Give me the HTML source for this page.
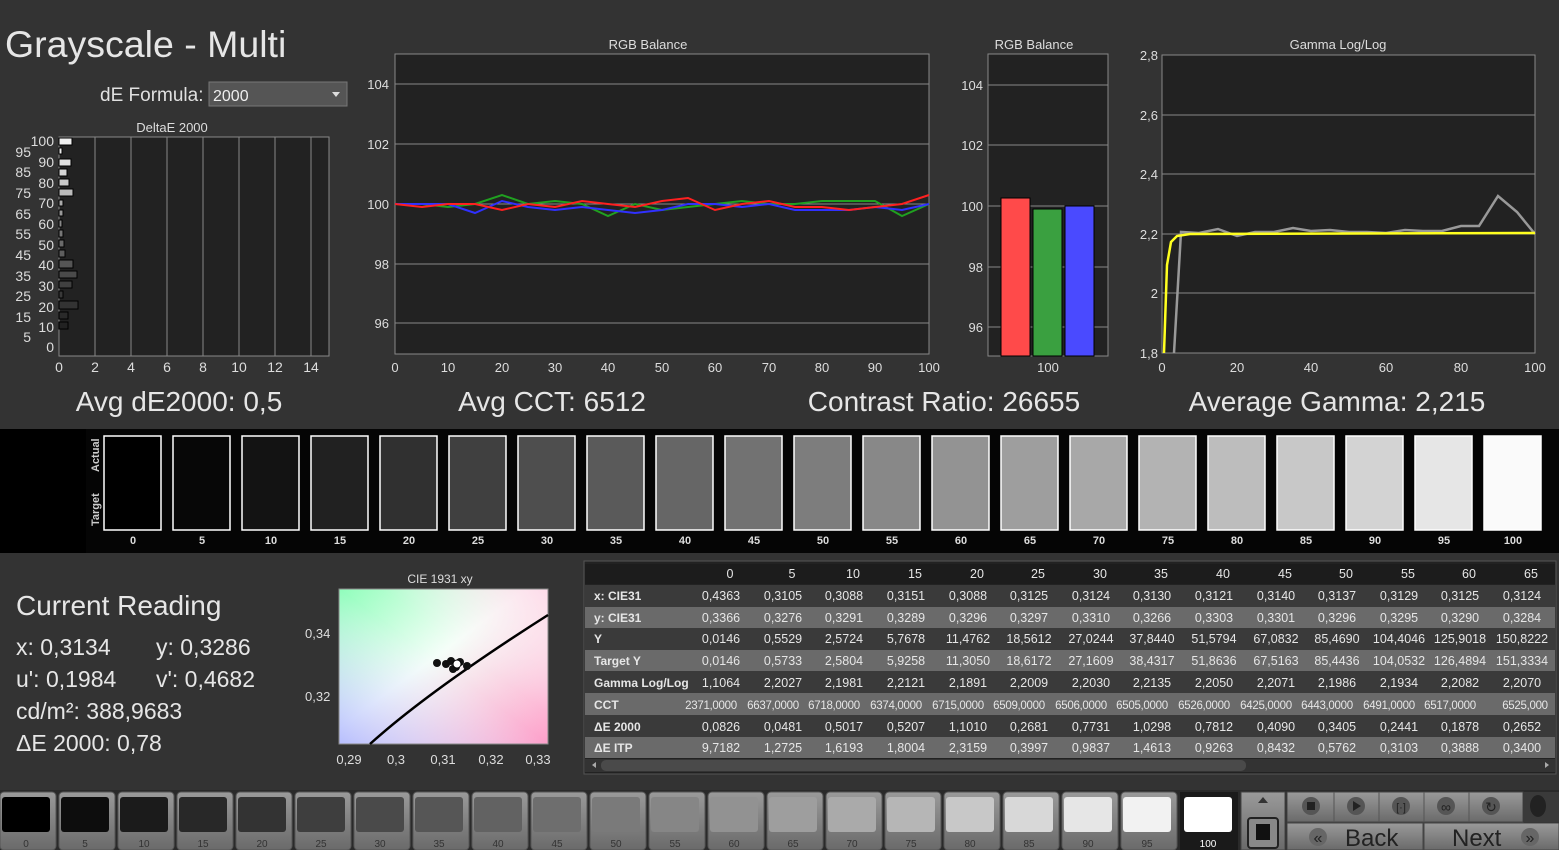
<!DOCTYPE html>
<html><head><meta charset="utf-8"><style>
html,body{margin:0;padding:0;background:#333;}
svg{display:block;font-family:"Liberation Sans",sans-serif;}
</style></head><body>
<svg width="1559" height="850" viewBox="0 0 1559 850" xmlns="http://www.w3.org/2000/svg">
<defs>
<linearGradient id="cieA" x1="0" y1="0" x2="1" y2="1">
<stop offset="0" stop-color="#7fffb0"/><stop offset="0.45" stop-color="#f4fff8"/><stop offset="1" stop-color="#ff8fc0"/></linearGradient>
<linearGradient id="cieB" x1="0" y1="1" x2="0.6" y2="0.4">
<stop offset="0" stop-color="#b0b8ff" stop-opacity="0.9"/><stop offset="1" stop-color="#ffffff" stop-opacity="0"/></linearGradient>
<linearGradient id="cieC" x1="1" y1="0" x2="0.5" y2="0.5">
<stop offset="0" stop-color="#ffd8e8" stop-opacity="0.9"/><stop offset="1" stop-color="#ffffff" stop-opacity="0"/></linearGradient>
<linearGradient id="btn" x1="0" y1="0" x2="0" y2="1"><stop offset="0" stop-color="#9a9a9a"/><stop offset="1" stop-color="#6a6a6a"/></linearGradient>
</defs>
<rect width="1559" height="850" fill="#333"/>
<text x="5" y="57" font-size="37.5" fill="#e6e6e6">Grayscale - Multi</text>
<text x="100" y="101" font-size="19" fill="#e0e0e0">dE Formula:</text>
<rect x="209" y="82" width="138" height="24" fill="#555" stroke="#777"/>
<text x="213" y="101" font-size="16" fill="#eee">2000</text>
<path d="M332 92 l8 0 l-4 5z" fill="#ddd"/>

<text x="172" y="132" font-size="13" fill="#ddd" text-anchor="middle">DeltaE 2000</text>
<rect x="59" y="137" width="270" height="219" fill="#222" stroke="#888"/>
<g stroke="#888" stroke-width="1">
<line x1="95" y1="137" x2="95" y2="356"/><line x1="131" y1="137" x2="131" y2="356"/><line x1="167" y1="137" x2="167" y2="356"/><line x1="203" y1="137" x2="203" y2="356"/><line x1="239" y1="137" x2="239" y2="356"/><line x1="275" y1="137" x2="275" y2="356"/><line x1="311" y1="137" x2="311" y2="356"/>
</g>
<g font-size="14" fill="#ddd" text-anchor="middle">
<text x="59" y="372">0</text><text x="95" y="372">2</text><text x="131" y="372">4</text><text x="167" y="372">6</text><text x="203" y="372">8</text><text x="239" y="372">10</text><text x="275" y="372">12</text><text x="311" y="372">14</text>
</g>
<g font-size="14" fill="#ddd" text-anchor="end">
<text x="54" y="146">100</text><text x="31" y="157">95</text><text x="54" y="167">90</text><text x="31" y="177">85</text><text x="54" y="188">80</text><text x="31" y="198">75</text><text x="54" y="208">70</text><text x="31" y="219">65</text><text x="54" y="229">60</text><text x="31" y="239">55</text><text x="54" y="250">50</text><text x="31" y="260">45</text><text x="54" y="270">40</text><text x="31" y="281">35</text><text x="54" y="291">30</text><text x="31" y="301">25</text><text x="54" y="312">20</text><text x="31" y="322">15</text><text x="54" y="332">10</text><text x="31" y="342">5</text><text x="54" y="352">0</text>
</g>
<g stroke="#000" stroke-width="1">
<rect x="59" y="138" width="13" height="7" fill="#f0f0f0"/>
<rect x="59" y="148" width="3" height="6" fill="#e8e8e8"/>
<rect x="59" y="159" width="12" height="7" fill="#e0e0e0"/>
<rect x="59" y="169" width="8" height="7" fill="#d4d4d4"/>
<rect x="59" y="179" width="10" height="7" fill="#c8c8c8"/>
<rect x="59" y="189" width="14" height="7" fill="#bbb"/>
<rect x="59" y="200" width="4" height="6" fill="#aaa"/>
<rect x="59" y="210" width="4" height="6" fill="#999"/>
<rect x="59" y="220" width="3" height="7" fill="#888"/>
<rect x="59" y="230" width="4" height="7" fill="#777"/>
<rect x="59" y="240" width="5" height="7" fill="#6a6a6a"/>
<rect x="59" y="250" width="6" height="7" fill="#5e5e5e"/>
<rect x="59" y="260" width="14" height="8" fill="#555"/>
<rect x="59" y="271" width="18" height="7" fill="#4a4a4a"/>
<rect x="59" y="281" width="13" height="7" fill="#404040"/>
<rect x="59" y="291" width="4" height="7" fill="#393939"/>
<rect x="59" y="301" width="19" height="8" fill="#333"/>
<rect x="59" y="312" width="9" height="7" fill="#2a2a2a"/>
<rect x="59" y="322" width="9" height="7" fill="#222"/>
</g>

<text x="648" y="49" font-size="13" fill="#ddd" text-anchor="middle">RGB Balance</text>
<rect x="395" y="54" width="534" height="300" fill="#222" stroke="#888"/>
<g stroke="#888"><line x1="395" y1="84" x2="929" y2="84"/><line x1="395" y1="144" x2="929" y2="144"/><line x1="395" y1="204" x2="929" y2="204"/><line x1="395" y1="264" x2="929" y2="264"/><line x1="395" y1="323" x2="929" y2="323"/></g>
<g font-size="13" fill="#ddd" text-anchor="end"><text x="389" y="89">104</text><text x="389" y="149">102</text><text x="389" y="209">100</text><text x="389" y="269">98</text><text x="389" y="328">96</text></g>
<g font-size="13" fill="#ddd" text-anchor="middle">
<text x="395" y="372">0</text><text x="448" y="372">10</text><text x="502" y="372">20</text><text x="555" y="372">30</text><text x="608" y="372">40</text><text x="662" y="372">50</text><text x="715" y="372">60</text><text x="769" y="372">70</text><text x="822" y="372">80</text><text x="875" y="372">90</text><text x="929" y="372">100</text></g>
<polyline fill="none" stroke="#20a020" stroke-width="2" points="395,204 422,204 448,207 475,204 502,195 528,204 555,201 582,204 608,216 635,204 662,210 688,207 715,204 742,201 769,204 795,204 822,201 849,201 875,201 902,216 929,204"/>
<polyline fill="none" stroke="#3030ff" stroke-width="2" points="395,204 422,204 448,204 475,213 502,201 528,207 555,210 582,207 608,210 635,213 662,210 688,204 715,204 742,207 769,204 795,210 822,210 849,210 875,207 902,210 929,204"/>
<polyline fill="none" stroke="#ff2020" stroke-width="2" points="395,204 422,207 448,204 475,204 502,210 528,204 555,207 582,201 608,204 635,207 662,201 688,198 715,210 742,204 769,201 795,207 822,207 849,210 875,207 902,204 929,195"/>

<text x="1034" y="49" font-size="13" fill="#ddd" text-anchor="middle">RGB Balance</text>
<rect x="988" y="54" width="120" height="302" fill="#222" stroke="#888"/>
<g stroke="#888"><line x1="988" y1="85" x2="1108" y2="85"/><line x1="988" y1="145" x2="1108" y2="145"/><line x1="988" y1="206" x2="1108" y2="206"/><line x1="988" y1="267" x2="1108" y2="267"/><line x1="988" y1="327" x2="1108" y2="327"/></g>
<g font-size="13" fill="#ddd" text-anchor="end"><text x="983" y="90">104</text><text x="983" y="150">102</text><text x="983" y="211">100</text><text x="983" y="272">98</text><text x="983" y="332">96</text></g>
<text x="1048" y="372" font-size="13" fill="#ddd" text-anchor="middle">100</text>
<rect x="1001" y="198" width="29" height="158" fill="#ff4a4a" stroke="#000"/>
<rect x="1033" y="209" width="29" height="147" fill="#3aa040" stroke="#000"/>
<rect x="1065" y="206" width="29" height="150" fill="#4a4aff" stroke="#000"/>

<text x="1338" y="49" font-size="13" fill="#ddd" text-anchor="middle">Gamma Log/Log</text>
<rect x="1162" y="55" width="373" height="298" fill="#222" stroke="#888"/>
<g stroke="#888"><line x1="1162" y1="115" x2="1535" y2="115"/><line x1="1162" y1="174" x2="1535" y2="174"/><line x1="1162" y1="234" x2="1535" y2="234"/><line x1="1162" y1="293" x2="1535" y2="293"/></g>
<g font-size="13" fill="#ddd" text-anchor="end"><text x="1158" y="60">2,8</text><text x="1158" y="120">2,6</text><text x="1158" y="179">2,4</text><text x="1158" y="239">2,2</text><text x="1158" y="298">2</text><text x="1158" y="358">1,8</text></g>
<g font-size="13" fill="#ddd" text-anchor="middle"><text x="1162" y="372">0</text><text x="1237" y="372">20</text><text x="1311" y="372">40</text><text x="1386" y="372">60</text><text x="1461" y="372">80</text><text x="1535" y="372">100</text></g>
<polyline fill="none" stroke="#999" stroke-width="2.5" points="1174,353 1181,232 1199,233 1218,229 1237,236 1255,232 1274,232 1293,228 1311,231 1330,230 1349,232 1367,232 1386,233 1405,230 1423,231 1442,231 1461,226 1479,226 1498,196 1517,212 1535,234"/>
<polyline fill="none" stroke="#ffff20" stroke-width="2.5" points="1164,353 1167,265 1171,242 1177,236 1190,234 1535,233"/>

<g font-size="28" fill="#e6e6e6" text-anchor="middle">
<text x="179" y="411">Avg dE2000: 0,5</text><text x="552" y="411">Avg CCT: 6512</text><text x="944" y="411">Contrast Ratio: 26655</text><text x="1337" y="411">Average Gamma: 2,215</text></g>

<rect x="0" y="429" width="1559" height="124" fill="#000"/>
<rect x="86" y="429" width="1473" height="124" fill="#050505"/>
<text transform="translate(99,472) rotate(-90)" font-size="11" fill="#ccc" font-weight="bold">Actual</text>
<text transform="translate(99,526) rotate(-90)" font-size="11" fill="#ccc" font-weight="bold">Target</text>
<g stroke="#fff" stroke-width="1.5">
<rect x="104" y="436" width="57" height="94" fill="#000"/>
<rect x="173" y="436" width="57" height="94" fill="#070707"/>
<rect x="242" y="436" width="57" height="94" fill="#131313"/>
<rect x="311" y="436" width="57" height="94" fill="#212121"/>
<rect x="380" y="436" width="57" height="94" fill="#303030"/>
<rect x="449" y="436" width="57" height="94" fill="#404040"/>
<rect x="518" y="436" width="57" height="94" fill="#4e4e4e"/>
<rect x="587" y="436" width="57" height="94" fill="#5a5a5a"/>
<rect x="656" y="436" width="57" height="94" fill="#666"/>
<rect x="725" y="436" width="57" height="94" fill="#727272"/>
<rect x="794" y="436" width="57" height="94" fill="#7d7d7d"/>
<rect x="863" y="436" width="57" height="94" fill="#888"/>
<rect x="932" y="436" width="57" height="94" fill="#939393"/>
<rect x="1001" y="436" width="57" height="94" fill="#9e9e9e"/>
<rect x="1070" y="436" width="57" height="94" fill="#a8a8a8"/>
<rect x="1139" y="436" width="57" height="94" fill="#b3b3b3"/>
<rect x="1208" y="436" width="57" height="94" fill="#bdbdbd"/>
<rect x="1277" y="436" width="57" height="94" fill="#c8c8c8"/>
<rect x="1346" y="436" width="57" height="94" fill="#d3d3d3"/>
<rect x="1415" y="436" width="57" height="94" fill="#e6e6e6"/>
<rect x="1484" y="436" width="57" height="94" fill="#fafafa"/>
</g>
<g font-size="11" fill="#ddd" text-anchor="middle" font-weight="bold">
<text x="133" y="544">0</text><text x="202" y="544">5</text><text x="271" y="544">10</text><text x="340" y="544">15</text><text x="409" y="544">20</text><text x="478" y="544">25</text><text x="547" y="544">30</text><text x="616" y="544">35</text><text x="685" y="544">40</text><text x="754" y="544">45</text><text x="823" y="544">50</text><text x="892" y="544">55</text><text x="961" y="544">60</text><text x="1030" y="544">65</text><text x="1099" y="544">70</text><text x="1168" y="544">75</text><text x="1237" y="544">80</text><text x="1306" y="544">85</text><text x="1375" y="544">90</text><text x="1444" y="544">95</text><text x="1513" y="544">100</text></g>

<text x="16" y="615" font-size="28" fill="#e6e6e6">Current Reading</text>
<g font-size="23" fill="#e6e6e6">
<text x="16" y="655">x: 0,3134</text><text x="156" y="655">y: 0,3286</text>
<text x="16" y="687">u': 0,1984</text><text x="156" y="687">v': 0,4682</text>
<text x="16" y="719">cd/m²: 388,9683</text>
<text x="16" y="751">ΔE 2000: 0,78</text></g>

<text x="440" y="583" font-size="12" fill="#ddd" text-anchor="middle">CIE 1931 xy</text>
<rect x="339" y="589" width="209" height="155" fill="url(#cieA)"/>
<rect x="339" y="589" width="209" height="155" fill="url(#cieB)"/>
<rect x="339" y="589" width="209" height="155" fill="url(#cieC)"/>
<rect x="339" y="589" width="209" height="155" fill="none" stroke="#888"/>
<path d="M370 744 Q430 690 548 615" fill="none" stroke="#000" stroke-width="2.5"/>
<g fill="#111"><circle cx="437" cy="663" r="4"/><circle cx="446" cy="664" r="4"/><circle cx="451" cy="661" r="4"/><circle cx="456" cy="667" r="4"/><circle cx="460" cy="662" r="4"/><circle cx="467" cy="666" r="4"/><circle cx="453" cy="669" r="4"/></g>
<circle cx="457" cy="664" r="4" fill="#fff" stroke="#000"/>
<g font-size="13" fill="#ddd"><text x="305" y="638">0,34</text><text x="305" y="701">0,32</text></g>
<g font-size="13" fill="#ddd" text-anchor="middle"><text x="349" y="764">0,29</text><text x="396" y="764">0,3</text><text x="443" y="764">0,31</text><text x="491" y="764">0,32</text><text x="538" y="764">0,33</text></g>

<rect x="584" y="561" width="972" height="213" fill="#222" stroke="#555"/>
<rect x="585" y="564" width="970" height="20" fill="#1c1c1c"/>
<rect x="585" y="585" width="970" height="22" fill="#3a3a3a"/>
<rect x="585" y="607" width="970" height="21" fill="#6a6a6a"/>
<rect x="585" y="628" width="970" height="22" fill="#3a3a3a"/>
<rect x="585" y="650" width="970" height="21" fill="#6a6a6a"/>
<rect x="585" y="671" width="970" height="22" fill="#3a3a3a"/>
<rect x="585" y="693" width="970" height="22" fill="#6a6a6a"/>
<rect x="585" y="715" width="970" height="22" fill="#3a3a3a"/>
<rect x="585" y="737" width="970" height="21" fill="#6a6a6a"/>
<rect x="585" y="759" width="970" height="13" fill="#333"/>
<rect x="601" y="760" width="645" height="11" rx="5" fill="#4a4a4a"/>
<path d="M592 765 l4 -3 v6z" fill="#aaa"/><path d="M1549 765 l-4 -3 v6z" fill="#aaa"/>
<g font-size="12" fill="#e6e6e6" font-weight="bold">
<text x="594" y="600">x: CIE31</text><text x="594" y="622">y: CIE31</text><text x="594" y="643">Y</text><text x="594" y="665">Target Y</text><text x="594" y="687">Gamma Log/Log</text><text x="594" y="709">CCT</text><text x="594" y="731">ΔE 2000</text><text x="594" y="752">ΔE ITP</text></g>
<g font-size="12.5" fill="#e6e6e6" text-anchor="middle">
<text y="578"><tspan x="730">0</tspan><tspan x="792">5</tspan><tspan x="853">10</tspan><tspan x="915">15</tspan><tspan x="977">20</tspan><tspan x="1038">25</tspan><tspan x="1100">30</tspan><tspan x="1161">35</tspan><tspan x="1223">40</tspan><tspan x="1285">45</tspan><tspan x="1346">50</tspan><tspan x="1408">55</tspan><tspan x="1469">60</tspan><tspan x="1531">65</tspan></text>
<text y="600"><tspan x="721">0,4363</tspan><tspan x="783">0,3105</tspan><tspan x="844">0,3088</tspan><tspan x="906">0,3151</tspan><tspan x="968">0,3088</tspan><tspan x="1029">0,3125</tspan><tspan x="1091">0,3124</tspan><tspan x="1152">0,3130</tspan><tspan x="1214">0,3121</tspan><tspan x="1276">0,3140</tspan><tspan x="1337">0,3137</tspan><tspan x="1399">0,3129</tspan><tspan x="1460">0,3125</tspan><tspan x="1522">0,3124</tspan></text>
<text y="622"><tspan x="721">0,3366</tspan><tspan x="783">0,3276</tspan><tspan x="844">0,3291</tspan><tspan x="906">0,3289</tspan><tspan x="968">0,3296</tspan><tspan x="1029">0,3297</tspan><tspan x="1091">0,3310</tspan><tspan x="1152">0,3266</tspan><tspan x="1214">0,3303</tspan><tspan x="1276">0,3301</tspan><tspan x="1337">0,3296</tspan><tspan x="1399">0,3295</tspan><tspan x="1460">0,3290</tspan><tspan x="1522">0,3284</tspan></text>
<text y="643"><tspan x="721">0,0146</tspan><tspan x="783">0,5529</tspan><tspan x="844">2,5724</tspan><tspan x="906">5,7678</tspan><tspan x="968">11,4762</tspan><tspan x="1029">18,5612</tspan><tspan x="1091">27,0244</tspan><tspan x="1152">37,8440</tspan><tspan x="1214">51,5794</tspan><tspan x="1276">67,0832</tspan><tspan x="1337">85,4690</tspan><tspan x="1399">104,4046</tspan><tspan x="1460">125,9018</tspan><tspan x="1522">150,8222</tspan></text>
<text y="665"><tspan x="721">0,0146</tspan><tspan x="783">0,5733</tspan><tspan x="844">2,5804</tspan><tspan x="906">5,9258</tspan><tspan x="968">11,3050</tspan><tspan x="1029">18,6172</tspan><tspan x="1091">27,1609</tspan><tspan x="1152">38,4317</tspan><tspan x="1214">51,8636</tspan><tspan x="1276">67,5163</tspan><tspan x="1337">85,4436</tspan><tspan x="1399">104,0532</tspan><tspan x="1460">126,4894</tspan><tspan x="1522">151,3334</tspan></text>
<text y="687"><tspan x="721">1,1064</tspan><tspan x="783">2,2027</tspan><tspan x="844">2,1981</tspan><tspan x="906">2,2121</tspan><tspan x="968">2,1891</tspan><tspan x="1029">2,2009</tspan><tspan x="1091">2,2030</tspan><tspan x="1152">2,2135</tspan><tspan x="1214">2,2050</tspan><tspan x="1276">2,2071</tspan><tspan x="1337">2,1986</tspan><tspan x="1399">2,1934</tspan><tspan x="1460">2,2082</tspan><tspan x="1522">2,2070</tspan></text>
<text y="709" font-size="11.5" letter-spacing="-0.3"><tspan x="711">2371,0000</tspan><tspan x="773">6637,0000</tspan><tspan x="834">6718,0000</tspan><tspan x="896">6374,0000</tspan><tspan x="958">6715,0000</tspan><tspan x="1019">6509,0000</tspan><tspan x="1081">6506,0000</tspan><tspan x="1142">6505,0000</tspan><tspan x="1204">6526,0000</tspan><tspan x="1266">6425,0000</tspan><tspan x="1327">6443,0000</tspan><tspan x="1389">6491,0000</tspan><tspan x="1450">6517,0000</tspan><tspan x="1525">6525,000</tspan></text>
<text y="731"><tspan x="721">0,0826</tspan><tspan x="783">0,0481</tspan><tspan x="844">0,5017</tspan><tspan x="906">0,5207</tspan><tspan x="968">1,1010</tspan><tspan x="1029">0,2681</tspan><tspan x="1091">0,7731</tspan><tspan x="1152">1,0298</tspan><tspan x="1214">0,7812</tspan><tspan x="1276">0,4090</tspan><tspan x="1337">0,3405</tspan><tspan x="1399">0,2441</tspan><tspan x="1460">0,1878</tspan><tspan x="1522">0,2652</tspan></text>
<text y="752"><tspan x="721">9,7182</tspan><tspan x="783">1,2725</tspan><tspan x="844">1,6193</tspan><tspan x="906">1,8004</tspan><tspan x="968">2,3159</tspan><tspan x="1029">0,3997</tspan><tspan x="1091">0,9837</tspan><tspan x="1152">1,4613</tspan><tspan x="1214">0,9263</tspan><tspan x="1276">0,8432</tspan><tspan x="1337">0,5762</tspan><tspan x="1399">0,3103</tspan><tspan x="1460">0,3888</tspan><tspan x="1522">0,3400</tspan></text>
</g>

<rect x="0" y="790" width="1559" height="60" fill="#2a2a2a"/>
<g stroke="#555">
<rect x="0" y="792" width="56" height="58" rx="4" fill="url(#btn)"/><rect x="59" y="792" width="56" height="58" rx="4" fill="url(#btn)"/><rect x="118" y="792" width="56" height="58" rx="4" fill="url(#btn)"/><rect x="177" y="792" width="56" height="58" rx="4" fill="url(#btn)"/><rect x="236" y="792" width="56" height="58" rx="4" fill="url(#btn)"/><rect x="295" y="792" width="56" height="58" rx="4" fill="url(#btn)"/><rect x="354" y="792" width="56" height="58" rx="4" fill="url(#btn)"/><rect x="413" y="792" width="56" height="58" rx="4" fill="url(#btn)"/><rect x="472" y="792" width="56" height="58" rx="4" fill="url(#btn)"/><rect x="531" y="792" width="56" height="58" rx="4" fill="url(#btn)"/><rect x="590" y="792" width="56" height="58" rx="4" fill="url(#btn)"/><rect x="649" y="792" width="56" height="58" rx="4" fill="url(#btn)"/><rect x="708" y="792" width="56" height="58" rx="4" fill="url(#btn)"/><rect x="767" y="792" width="56" height="58" rx="4" fill="url(#btn)"/><rect x="826" y="792" width="56" height="58" rx="4" fill="url(#btn)"/><rect x="885" y="792" width="56" height="58" rx="4" fill="url(#btn)"/><rect x="944" y="792" width="56" height="58" rx="4" fill="url(#btn)"/><rect x="1003" y="792" width="56" height="58" rx="4" fill="url(#btn)"/><rect x="1062" y="792" width="56" height="58" rx="4" fill="url(#btn)"/><rect x="1121" y="792" width="56" height="58" rx="4" fill="url(#btn)"/>
</g>
<rect x="1180" y="792" width="58" height="58" fill="#1a1a1a"/>
<g>
<rect x="2" y="797" width="48" height="35" rx="3" fill="#000"/><rect x="61" y="797" width="48" height="35" rx="3" fill="#0d0d0d"/><rect x="120" y="797" width="48" height="35" rx="3" fill="#1b1b1b"/><rect x="179" y="797" width="48" height="35" rx="3" fill="#282828"/><rect x="238" y="797" width="48" height="35" rx="3" fill="#333"/><rect x="297" y="797" width="48" height="35" rx="3" fill="#3e3e3e"/><rect x="356" y="797" width="48" height="35" rx="3" fill="#4a4a4a"/><rect x="415" y="797" width="48" height="35" rx="3" fill="#565656"/><rect x="474" y="797" width="48" height="35" rx="3" fill="#626262"/><rect x="533" y="797" width="48" height="35" rx="3" fill="#6e6e6e"/><rect x="592" y="797" width="48" height="35" rx="3" fill="#7a7a7a"/><rect x="651" y="797" width="48" height="35" rx="3" fill="#868686"/><rect x="710" y="797" width="48" height="35" rx="3" fill="#929292"/><rect x="769" y="797" width="48" height="35" rx="3" fill="#9e9e9e"/><rect x="828" y="797" width="48" height="35" rx="3" fill="#aaa"/><rect x="887" y="797" width="48" height="35" rx="3" fill="#b6b6b6"/><rect x="946" y="797" width="48" height="35" rx="3" fill="#c8c8c8"/><rect x="1005" y="797" width="48" height="35" rx="3" fill="#d8d8d8"/><rect x="1064" y="797" width="48" height="35" rx="3" fill="#e6e6e6"/><rect x="1123" y="797" width="48" height="35" rx="3" fill="#f2f2f2"/><rect x="1184" y="797" width="48" height="35" rx="3" fill="#fff"/>
</g>
<g font-size="10" fill="#333" text-anchor="middle">
<text x="26" y="847">0</text><text x="85" y="847">5</text><text x="144" y="847">10</text><text x="203" y="847">15</text><text x="262" y="847">20</text><text x="321" y="847">25</text><text x="380" y="847">30</text><text x="439" y="847">35</text><text x="498" y="847">40</text><text x="557" y="847">45</text><text x="616" y="847">50</text><text x="675" y="847">55</text><text x="734" y="847">60</text><text x="793" y="847">65</text><text x="852" y="847">70</text><text x="911" y="847">75</text><text x="970" y="847">80</text><text x="1029" y="847">85</text><text x="1088" y="847">90</text><text x="1147" y="847">95</text></g>
<text x="1208" y="847" font-size="10" fill="#fff" text-anchor="middle">100</text>
<rect x="1241" y="792" width="44" height="58" fill="url(#btn)" stroke="#444"/>
<path d="M1258 803 l5 -6 l5 6z" fill="#333"/>
<rect x="1248" y="818" width="30" height="30" rx="3" fill="#888" stroke="#222" stroke-width="2"/>
<rect x="1256" y="824" width="14" height="16" fill="#111"/>
<rect x="1287" y="792" width="236" height="30" fill="url(#btn)" stroke="#444"/>
<g stroke="#555"><line x1="1334" y1="792" x2="1334" y2="822"/><line x1="1379" y1="792" x2="1379" y2="822"/><line x1="1424" y1="792" x2="1424" y2="822"/><line x1="1469" y1="792" x2="1469" y2="822"/></g>
<g fill="#555"><circle cx="1311" cy="806" r="9"/><circle cx="1356" cy="806" r="9"/><circle cx="1401" cy="806" r="9"/><circle cx="1446" cy="806" r="9"/><circle cx="1491" cy="806" r="9"/></g>
<rect x="1307" y="802" width="8" height="8" fill="#222"/>
<path d="M1353 801 l8 5 l-8 5z" fill="#222"/>
<text x="1401" y="811" font-size="11" fill="#222" text-anchor="middle">[·]</text>
<text x="1446" y="812" font-size="14" fill="#222" text-anchor="middle">∞</text>
<text x="1491" y="812" font-size="14" fill="#222" text-anchor="middle">↻</text>
<rect x="1523" y="792" width="36" height="30" fill="#3a3a3a"/>
<ellipse cx="1538" cy="806" rx="8" ry="11" fill="#222"/>
<rect x="1287" y="823" width="136" height="27" fill="url(#btn)" stroke="#444"/>
<rect x="1424" y="823" width="135" height="27" fill="url(#btn)" stroke="#444"/>
<circle cx="1318" cy="837" r="9" fill="#666"/><circle cx="1530" cy="837" r="9" fill="#666"/>
<text x="1318" y="843" font-size="16" fill="#222" text-anchor="middle">«</text>
<text x="1530" y="843" font-size="16" fill="#222" text-anchor="middle">»</text>
<text x="1345" y="846" font-size="24" fill="#222">Back</text>
<text x="1452" y="846" font-size="24" fill="#222">Next</text>
</svg>
</body></html>
